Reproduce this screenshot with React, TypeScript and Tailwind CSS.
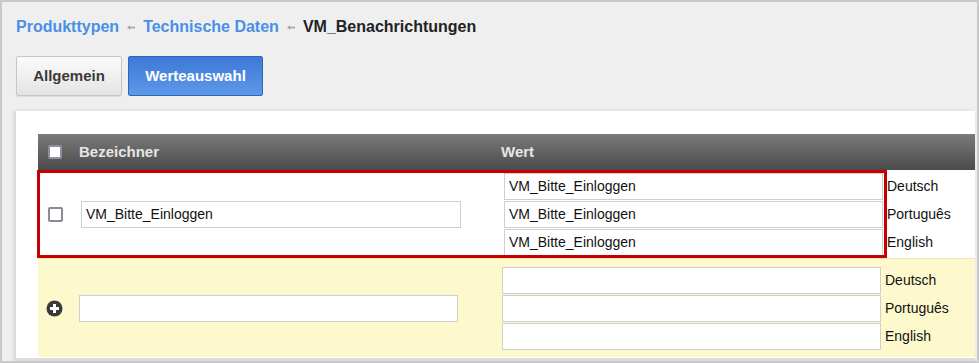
import React from 'react';

const langs = ['Deutsch', 'Português', 'English'];

const Arrow: React.FC = () => (
  <svg width="8" height="7" viewBox="0 0 8 7" className="mx-[8px] mt-[2px]">
    <path d="M0 3.5 L3.2 1.2 L3.2 2.8 L8 2.8 L8 4.2 L3.2 4.2 L3.2 5.8 Z" fill="#a3a3a3" />
  </svg>
);

const Checkbox: React.FC<{ dark?: boolean }> = ({ dark }) => (
  <span
    className={
      dark
        ? 'block w-[14px] h-[14px] rounded-[2px] border-2 border-[#8f8fa0] bg-white'
        : 'block w-[15px] h-[15px] rounded-[2px] border-2 border-[#8a8a94] bg-white'
    }
  />
);

const Field: React.FC<{ value?: string; w: string }> = ({ value, w }) => (
  <div className={`${w} h-[27px] border border-[#cfcfcf] bg-white flex items-center pl-[4px] text-[14px] text-[#111]`}>
    {value}
  </div>
);

const App: React.FC = () => {
  return (
    <div
      className="w-[979px] h-[363px] overflow-hidden bg-[#efefef] border-[2px] border-[#c9c9c9] flex flex-col"
      style={{ fontFamily: '"Liberation Sans", Arial, sans-serif' }}
    >
      {/* Breadcrumb */}
      <div className="flex items-center pl-[14px] pt-[13px] h-[36px] text-[16px] font-bold">
        <span className="text-[#4a8fe7]">Produkttypen</span>
        <Arrow />
        <span className="text-[#4a8fe7]">Technische Daten</span>
        <Arrow />
        <span className="text-[#222]">VM_Benachrichtungen</span>
      </div>

      {/* Tabs */}
      <div className="flex gap-[6px] pl-[14px] pt-[18px]">
        <button className="w-[106px] h-[40px] rounded-[2px] border border-[#c6c6c6] bg-gradient-to-b from-[#fbfbfb] to-[#e4e4e4] text-[15px] font-bold text-[#3a3a3a] shadow-[0_1px_1px_rgba(0,0,0,0.08)]">
          Allgemein
        </button>
        <button className="w-[135px] h-[40px] rounded-[2px] border border-[#2e66b8] bg-gradient-to-b from-[#3c79d6] to-[#5e98e9] text-[15px] font-bold text-white">
          Werteauswahl
        </button>
      </div>

      {/* Panel */}
      <div className="ml-[14px] mr-[2px] mt-[15px] flex-1 bg-white shadow-[-2px_0_4px_rgba(0,0,0,0.12)] pl-[22px] pt-[23px] border-b-[3px] border-[#dcdcdc]">
        <div className="relative">
          {/* Header */}
          <div className="h-[36px] flex items-center bg-gradient-to-b from-[#7b7b7b] to-[#4b4b4b] text-[15px] font-bold text-[#e6e6e6]">
            <div className="w-[41px] pl-[10px]">
              <Checkbox dark />
            </div>
            <div className="w-[422px]">Bezeichner</div>
            <div>Wert</div>
          </div>

          {/* Row 1 */}
          <div className="h-[88px] flex items-center bg-white pl-[2px]">
            <div className="w-[41px] pl-[8px]">
              <Checkbox />
            </div>
            <Field w="w-[380px]" value="VM_Bitte_Einloggen" />
            <div className="ml-[43px] flex flex-col gap-[1px]">
              {langs.map((l) => (
                <div key={l} className="flex items-center">
                  <Field w="w-[379px]" value="VM_Bitte_Einloggen" />
                  <span className="pl-[4px] text-[14px] text-[#111]">{l}</span>
                </div>
              ))}
            </div>
          </div>

          {/* Row 2 */}
          <div className="h-[99px] flex items-center bg-[#fef9cd] border-t border-[#ece6bb]">
            <div className="w-[41px] pl-[8px]">
              <svg width="17" height="17" viewBox="0 0 17 17">
                <circle cx="8.5" cy="8.5" r="8" fill="#3a3a3a" />
                <rect x="4" y="7" width="9" height="3" fill="#fff" />
                <rect x="7" y="4" width="3" height="9" fill="#fff" />
              </svg>
            </div>
            <Field w="w-[379px]" />
            <div className="ml-[44px] flex flex-col gap-[1px]">
              {langs.map((l) => (
                <div key={l} className="flex items-center">
                  <Field w="w-[379px]" />
                  <span className="pl-[4px] text-[14px] text-[#111]">{l}</span>
                </div>
              ))}
            </div>
          </div>

          {/* Highlight annotation */}
          <div className="absolute left-[-1px] top-[36px] w-[850px] h-[88px] border-[3px] border-[#c60000] pointer-events-none" />
        </div>
      </div>
    </div>
  );
};

export default App;
